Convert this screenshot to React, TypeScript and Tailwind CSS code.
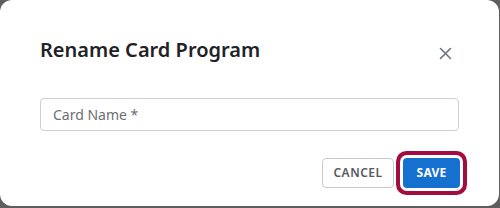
import React from "react";

export default function App() {
  return (
    <div className="w-[500px] h-[208px] bg-[#5e5e5e] overflow-hidden" style={{ fontFamily: '"Noto Sans", "Open Sans", sans-serif' }}>
      <div className="w-[499px] h-[206px] bg-white rounded-[12px] px-10 pt-[36px] flex flex-col">
        <div className="flex items-start justify-between">
          <h2 className="text-[20px] leading-7 font-semibold text-[#1f2328]">Rename Card Program</h2>
          <button className="w-6 h-6 mt-[5px] mr-[2px] flex items-center justify-center text-[#6b7280]" aria-label="Close">
            <svg width="13" height="13" viewBox="0 0 13 13" fill="none" stroke="currentColor" strokeWidth="1.6" strokeLinecap="round">
              <path d="M1.5 1.5 L11.5 11.5 M11.5 1.5 L1.5 11.5" />
            </svg>
          </button>
        </div>
        <input
          className="mt-[33px] h-[33px] w-full border border-[#cfcfcf] rounded-[4px] px-3 text-[14px] text-[#333] placeholder:text-[#6b6e73] outline-none"
          placeholder="Card Name *"
        />
        <div className="mt-[27px] flex justify-end gap-[9px] mr-[-1px]">
          <button className="w-[72px] h-[30px] border border-[#c9c9c9] rounded-[4px] bg-white text-[12px] font-semibold tracking-[0.04em] text-[#555a60]">
            CANCEL
          </button>
          <button className="w-[57px] h-[30px] rounded-[4px] bg-[#1570d0] text-white text-[12px] font-bold tracking-[0.02em] shadow-[0_0_0_3px_#ffffff,0_0_0_7px_#a30c40]">
            SAVE
          </button>
        </div>
      </div>
    </div>
  );
}
